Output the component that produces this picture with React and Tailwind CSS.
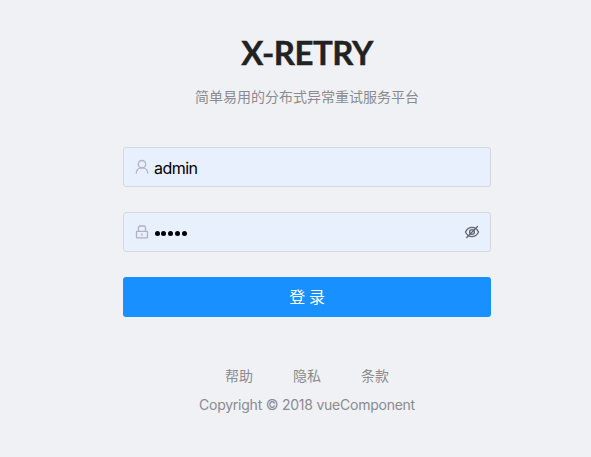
function UserIcon() {
  return (
    <svg className="h-4 w-4 shrink-0" viewBox="0 0 16 16" fill="none" stroke="#b0b4c0" strokeWidth="1.3" strokeLinecap="round">
      <circle cx="8" cy="5.2" r="3.7" />
      <path d="M2.3 14C2.4 11 4.9 8.9 8 8.9s5.6 2.1 5.7 5.1" />
    </svg>
  );
}

function LockIcon() {
  return (
    <svg className="h-4 w-4 shrink-0" viewBox="0 0 16 16" fill="none" stroke="#b0b4c0" strokeWidth="1.3" strokeLinejoin="round">
      <rect x="2.5" y="7.4" width="11" height="6.4" rx="0.4" />
      <path d="M4.5 7.4V3.4c0-.8.6-1.4 1.4-1.4h4.2c.8 0 1.4.6 1.4 1.4v4" />
      <path d="M8 9.9v1.5" strokeLinecap="round" />
    </svg>
  );
}

function EyeInvisibleIcon() {
  return (
    <svg className="h-4 w-4 shrink-0" viewBox="0 0 16 16" fill="none" stroke="#60656f" strokeWidth="1.3" strokeLinecap="round">
      <path d="M1.5 8C2.9 5 5.1 3.3 8 3.3s5.1 1.7 6.5 4.7c-1.4 3-3.6 4.7-6.5 4.7S2.9 11 1.5 8Z" />
      <circle cx="8" cy="8" r="2.4" />
      <path d="M2.7 13.5 13.5 2.5" />
    </svg>
  );
}

function Field({ icon, children, suffix }) {
  return (
    <div className="flex h-10 w-full items-center rounded-[3px] border border-[#d6d8dd] bg-[#e8effd] pr-[10px] pl-[10px]">
      {icon}
      {children}
      {suffix}
    </div>
  );
}

export default function App() {
  return (
    <div className="h-[457px] w-[591px] overflow-hidden bg-[#f0f1f5] pl-[123px] font-['Inter','Noto_Sans_CJK_SC',sans-serif]">
      <div className="flex w-[368px] flex-col items-center">
        <h1 className="mt-[30px] h-11 font-['Lato',sans-serif] text-[33px] leading-[44px] font-bold tracking-[-0.5px] whitespace-nowrap text-[#222] [-webkit-text-stroke:0.4px_#222]">
          X-RETRY
        </h1>
        <p className="mt-[12px] h-[22px] text-[14px] leading-[22px] whitespace-nowrap text-[#8a8b8e]">
          简单易用的分布式异常重试服务平台
        </p>
        <form className="mt-[39px] flex w-full flex-col gap-[25px]">
          <Field icon={<UserIcon />}>
            <span className="mt-px ml-1 flex-1 text-[16px] leading-6 tracking-[-0.55px] text-black">admin</span>
          </Field>
          <Field icon={<LockIcon />} suffix={<EyeInvisibleIcon />}>
            <span className="mt-[3px] ml-[4.5px] flex flex-1 gap-[1.8px]">
              {[0, 1, 2, 3, 4].map((i) => (
                <span key={i} className="h-[5px] w-[5px] rounded-full bg-black" />
              ))}
            </span>
          </Field>
          <button type="button" className="h-10 w-full rounded-[3px] bg-[#1890ff] text-[16px] tracking-[-0.3px] text-white">
            登 录
          </button>
        </form>
        <nav className="mt-[48px] flex h-[22px] gap-10 text-[14px] leading-[22px] text-[#8a8b8e]">
          <a>帮助</a>
          <a>隐私</a>
          <a>条款</a>
        </nav>
        <p className="mt-[7px] text-[14px] leading-[22px] tracking-[-0.24px] whitespace-nowrap text-[#8a8b8e]">
          Copyright © 2018 vueComponent
        </p>
      </div>
    </div>
  );
}
